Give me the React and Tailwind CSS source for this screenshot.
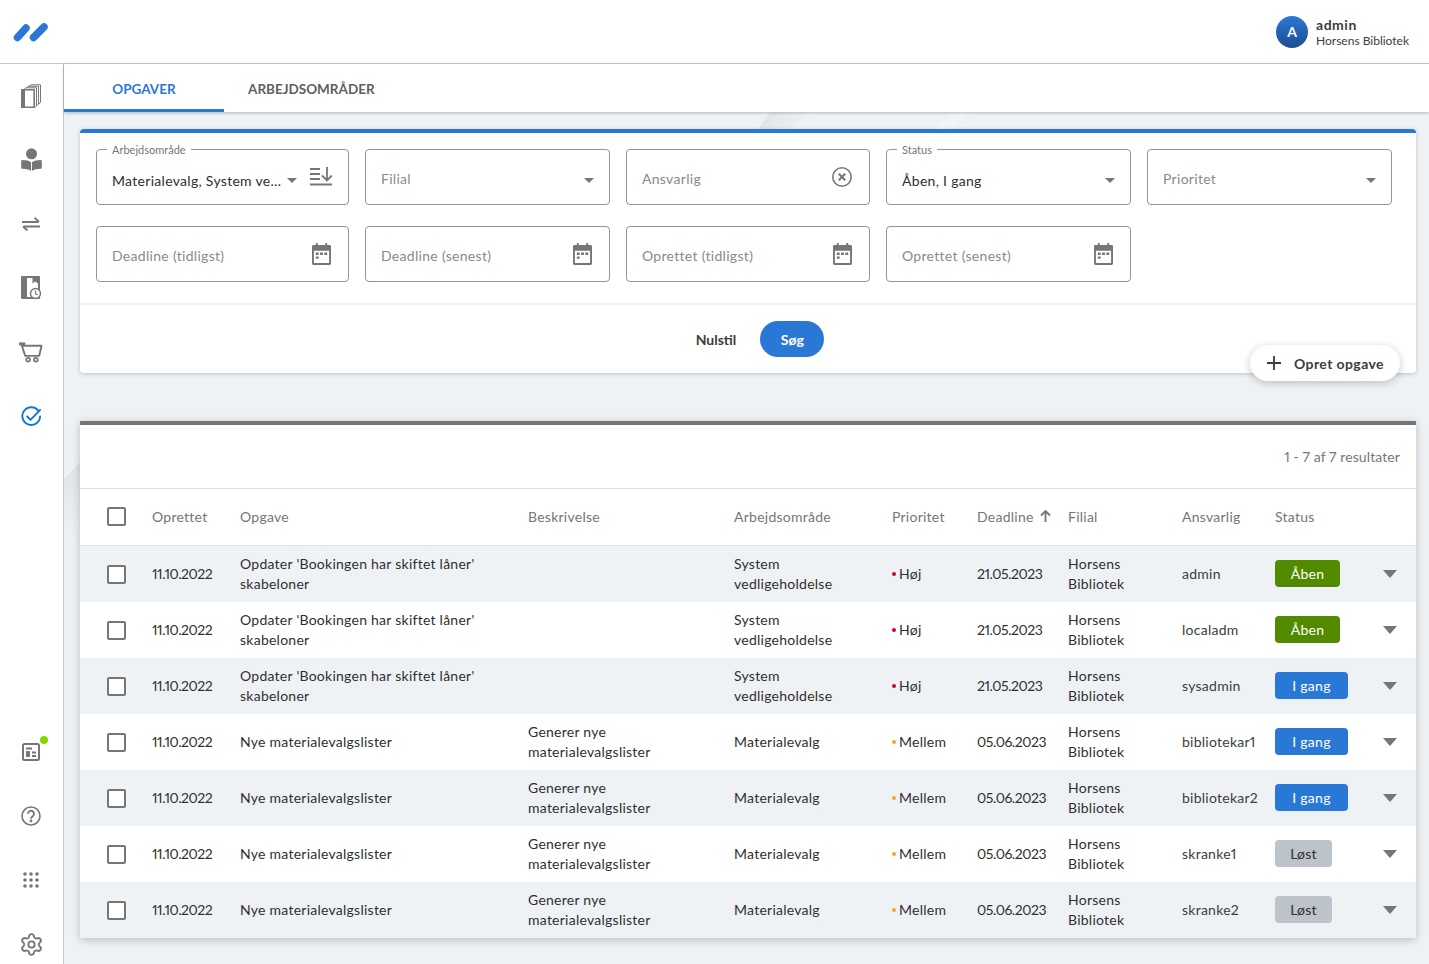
import { Settings } from "lucide-react";

const BLUE = "#2a78d6";

function BooksIcon() {
  return (
    <svg width="20" height="24" viewBox="0 0 20 24" fill="none" stroke="#767676">
      <path d="M8 2.500 9.500 .8h10v17.500L18 20" strokeWidth="1" />
      <path d="M5.500 4 7 2.300h10.500V20L16 21.500" strokeWidth="1" fill="#fff" />
      <path d="M3 5.500 4.500 3.800h11V22L14 23.500" strokeWidth="1" fill="#fff" />
      <path d="M.8 5.800h12.400v17.400H.8z" strokeWidth="1.600" fill="#fff" />
      <path d="M.5 5.500h3.500v18H.5z" fill="#767676" stroke="none" />
    </svg>
  );
}

function ReaderIcon() {
  return (
    <svg width="21" height="24" viewBox="0 0 22 25" fill="#767676">
      <circle cx="11" cy="6" r="5.800" />
      <path d="M1.500 12.500c3.500 0 7 .8 9 2.300V24c-2-1.500-5.500-2.300-9-2.300a1.300 1.300 0 0 1-1.300-1.300v-6.600a1.300 1.300 0 0 1 1.300-1.300z" />
      <path d="M20.500 12.500c-3.500 0-7 .8-9 2.300V24c2-1.500 5.500-2.300 9-2.300a1.300 1.300 0 0 0 1.300-1.300v-6.600a1.300 1.300 0 0 0-1.300-1.300z" />
    </svg>
  );
}

function SwapIcon() {
  return (
    <svg width="18" height="14" viewBox="0 0 18 14" fill="none" stroke="#767676" strokeWidth="1.800">
      <path d="M0 5h16.500M12.500 .7 17 5" />
      <path d="M18 9.500H1.500M5.500 13.500 1 9.500" />
    </svg>
  );
}

function BookClockIcon() {
  return (
    <svg width="20" height="24" viewBox="0 0 20 24" fill="none">
      <rect x="0" y="0" width="19" height="23" rx="1" fill="#767676" />
      <path d="M6 2h11v19H6z" fill="#fff" />
      <path d="M11.500 0h5.500v7.500l-2.750-2-2.750 2z" fill="#767676" />
      <circle cx="14.500" cy="17.500" r="5" stroke="#767676" strokeWidth="1.400" fill="#fff" />
      <path d="M14.500 14.500v3.300l2.300 1" stroke="#767676" strokeWidth="1.200" />
    </svg>
  );
}

function CartIcon() {
  return (
    <svg width="24" height="21" viewBox="0 0 25 21" fill="none" stroke="#767676">
      <path d="M0 1.500h6.500" strokeWidth="3" />
      <path d="M3 3.500h20.500L21 14H6.500z" strokeWidth="2" strokeLinejoin="round" />
      <circle cx="9.500" cy="18" r="2" strokeWidth="1.800" />
      <circle cx="17.500" cy="18" r="2" strokeWidth="1.800" />
    </svg>
  );
}

function TaskIcon() {
  return (
    <svg width="21" height="21" viewBox="0 0 22 22" fill="none" stroke="#0b78d0" strokeWidth="2">
      <path d="M18.300 5.200A9.300 9.300 0 1 0 20 11" strokeLinecap="round" />
      <path d="M6.500 11l3.500 3.500L20 4" strokeLinecap="round" strokeLinejoin="round" />
    </svg>
  );
}

function NewsIcon() {
  return (
    <svg width="18" height="18" viewBox="0 0 18 18" fill="none" stroke="#767676" strokeWidth="2">
      <rect x="1" y="1" width="16" height="16" rx="1.500" />
      <path d="M4 5.500h6" />
      <path d="M4.500 8.500h3v5h-3z" fill="#767676" strokeWidth="1" />
      <path d="M10 9.500h4M10 13h4" />
    </svg>
  );
}

function HelpIcon() {
  return (
    <svg width="20" height="20" viewBox="0 0 20 20" fill="none" stroke="#767676" strokeWidth="1.600">
      <circle cx="10" cy="10" r="9" />
      <path d="M7 7.800a3 3 0 1 1 4.800 2.400c-1.200.8-1.800 1.400-1.800 2.500" strokeWidth="1.800" />
      <circle cx="10" cy="15" r=".6" fill="#767676" />
    </svg>
  );
}

function DotsIcon() {
  const dots = [2, 8, 14];
  return (
    <svg width="16" height="16" viewBox="0 0 16 16" fill="#767676">
      {dots.map((y) => dots.map((x) => <circle key={`${x}-${y}`} cx={x} cy={y} r="1.800" />))}
    </svg>
  );
}

function CalendarIcon() {
  return (
    <svg width="19" height="22" viewBox="0 0 20 23" fill="#767676" className="shrink-0 mr-px">
      <path d="M4 0h2v3H4zM14 0h2v3h-2z" />
      <path d="M1.500 2h17A1.500 1.500 0 0 1 20 3.500v18a1.500 1.500 0 0 1-1.500 1.500h-17A1.500 1.500 0 0 1 0 21.500v-18A1.500 1.500 0 0 1 1.500 2zM2 8v13h16V8z" fillRule="evenodd" />
      <path d="M4 10h3v2.500H4zM8.500 10h3v2.500h-3zM13 10h3v2.500h-3zM4 14h3v2.500H4z" />
    </svg>
  );
}

function Caret({ large }) {
  return large ? (
    <span className="block w-0 h-0 border-x-[7px] border-t-[8px] border-x-transparent border-t-[#767676]" />
  ) : (
    <span className="block w-0 h-0 mt-[7px] translate-x-px border-x-[5px] border-t-[5px] border-x-transparent border-t-[#767676]" />
  );
}

function Field({ label, placeholder, value, children }) {
  return (
    <div className="relative h-14 rounded border border-[#949494] flex items-center pl-[15px] pr-4 tracking-[0.3px]">
      {label && (
        <span className="absolute -top-[7px] left-[10px] bg-white px-[5px] text-[11px] leading-[13px] tracking-normal text-[#767676]">
          {label}
        </span>
      )}
      {value ? (
        <span className="flex-1 truncate pt-[7px] text-[#2f2f2f]">{value}</span>
      ) : (
        <span className="flex-1 truncate pt-[2px] text-[#8a8a8a]">{placeholder}</span>
      )}
      {children}
    </div>
  );
}

const tasks = [
  { name: "Opdater 'Bookingen har skiftet låner' skabeloner", desc: "", area: "System vedligeholdelse", prio: "Høj", deadline: "21.05.2023", owner: "admin", status: "Åben" },
  { name: "Opdater 'Bookingen har skiftet låner' skabeloner", desc: "", area: "System vedligeholdelse", prio: "Høj", deadline: "21.05.2023", owner: "localadm", status: "Åben" },
  { name: "Opdater 'Bookingen har skiftet låner' skabeloner", desc: "", area: "System vedligeholdelse", prio: "Høj", deadline: "21.05.2023", owner: "sysadmin", status: "I gang" },
  { name: "Nye materialevalgslister", desc: "Generer nye materialevalgslister", area: "Materialevalg", prio: "Mellem", deadline: "05.06.2023", owner: "bibliotekar1", status: "I gang" },
  { name: "Nye materialevalgslister", desc: "Generer nye materialevalgslister", area: "Materialevalg", prio: "Mellem", deadline: "05.06.2023", owner: "bibliotekar2", status: "I gang" },
  { name: "Nye materialevalgslister", desc: "Generer nye materialevalgslister", area: "Materialevalg", prio: "Mellem", deadline: "05.06.2023", owner: "skranke1", status: "Løst" },
  { name: "Nye materialevalgslister", desc: "Generer nye materialevalgslister", area: "Materialevalg", prio: "Mellem", deadline: "05.06.2023", owner: "skranke2", status: "Løst" },
];

const badge = {
  "Åben": "w-[65px] bg-[#538b00] text-white",
  "I gang": "w-[73px] bg-[#2a78d6] text-white",
  "Løst": "w-[57px] bg-[#bdc3cb] text-[#2f2f2f]",
};

const cols = "grid grid-cols-[72px_88px_288px_206px_158px_85px_91px_114px_93px_93px_48px] items-center tracking-[0.25px]";

function Checkbox() {
  return <span className="block ml-[27px] w-[19px] h-[19px] rounded-[2px] border-2 border-[#767676] bg-white" />;
}

export default function App() {
  return (
    <div className="h-screen overflow-hidden bg-white flex flex-col font-['Lato',sans-serif] proportional-nums text-[14px] text-[#2f2f2f]">
      <header className="h-16 shrink-0 border-b border-[#c3c7d0] flex items-center justify-between pl-[13px] pr-5">
        <svg width="36" height="20" viewBox="0 0 36 20" stroke={BLUE} strokeWidth="7.500" strokeLinecap="round">
          <path d="M4.500 15.500 13 6M20.500 15.500 31 5" />
        </svg>
        <div className="flex items-center gap-2">
          <div className="w-8 h-8 rounded-full bg-gradient-to-b from-[#2a78d6] to-[#1d4e91] text-white font-bold flex items-center justify-center">A</div>
          <div className="leading-[15px] pt-[2px]">
            <div className="font-bold tracking-[0.5px] text-[#3c3c3c]">admin</div>
            <div className="mt-px text-[12px] text-[#3c3c3c]">Horsens Bibliotek</div>
          </div>
        </div>
      </header>

      <div className="flex flex-1 min-h-0">
        <nav className="w-16 shrink-0 border-r border-[#c3c7d0] flex flex-col">
          {[<BooksIcon />, <ReaderIcon />, <SwapIcon />, <BookClockIcon />, <CartIcon />, <TaskIcon />].map((icon, i) => (
            <div key={i} className="h-16 shrink-0 pr-px flex items-center justify-center">{icon}</div>
          ))}
          <div className="h-[272px] shrink-0" />
          <div className="relative h-16 shrink-0 pr-px flex items-center justify-center">
            <NewsIcon />
            <span className="absolute top-[16px] left-[40px] w-2 h-2 rounded-full bg-[#84d600]" />
          </div>
          <div className="h-16 shrink-0 pr-px flex items-center justify-center"><HelpIcon /></div>
          <div className="h-16 shrink-0 pr-px flex items-center justify-center"><DotsIcon /></div>
          <div className="h-16 shrink-0 pr-px flex items-center justify-center">
            <Settings size={25} color="#767676" strokeWidth={1.800} />
          </div>
        </nav>

        <main className="relative flex-1 min-w-0 flex flex-col bg-[#eff2f5]">
          {/* faint diagonal shapes in the page background */}
          <svg className="absolute inset-0 w-full h-full">
            <defs>
              <linearGradient id="band" x1="0" x2="1" y1="0" y2="0">
                <stop offset="0" stopColor="#e0e3e7" />
                <stop offset="1" stopColor="#eff2f5" />
              </linearGradient>
              <linearGradient id="fade" x1="0" x2="0" y1="0" y2="1">
                <stop offset="0" stopColor="#e0e3e7" />
                <stop offset="1" stopColor="#eff2f5" />
              </linearGradient>
            </defs>
            <path d="M706 48h40l-20 20h-34z" fill="url(#band)" />
            <path d="M890 48h16l-20 20h-16z" fill="#f3f4f5" />
            <path d="M16 398 0 415v60h16z" fill="url(#fade)" />
            <path d="M1352 790v60l-20 20v-60z" fill="#f5f6f8" />
          </svg>

          <div className="h-12 shrink-0 bg-white flex shadow-[0_1px_3px_rgba(0,0,0,0.25)] relative">
            <div className="w-40 border-b-[3px] border-[#2a78d6] flex items-center justify-center font-bold text-[13.500px] text-[#2a78d6] pt-[5px]">OPGAVER</div>
            <div className="px-6 flex items-center font-bold text-[13.500px] text-[#5f5f5f] pt-[2px]">ARBEJDSOMRÅDER</div>
          </div>

          <div className="relative pl-4 pr-[13px] pt-[17px]">
            <section className="relative bg-white rounded border-t-4 border-[#2a78d6] shadow-[0_1px_4px_rgba(0,0,0,0.2)]">
              <div className="grid grid-cols-[253px_245px_244px_245px_245px] gap-x-4 gap-y-[21px] px-4 pt-4 pb-[21px] border-b-2 border-[#f1f4f7]">
                <Field label="Arbejdsområde" value="Materialevalg, System vedligeholdelse">
                  <span className="ml-[2px]"><Caret /></span>
                  <svg width="22" height="19" viewBox="0 0 22 19" fill="none" stroke="#767676" strokeWidth="1.800" className="ml-[14px] -mt-[1px]">
                    <path d="M0 17.500h22M0 2h10M0 7h10M0 12h10" />
                    <path d="M17 0v13M12 8.500l5 5 5-5" />
                  </svg>
                </Field>
                <Field placeholder="Filial"><Caret /></Field>
                <Field placeholder="Ansvarlig">
                  <svg width="22" height="22" viewBox="0 0 22 22" fill="none" stroke="#767676">
                    <circle cx="11" cy="11" r="9.200" strokeWidth="1.600" />
                    <path d="M7.800 7.800l6.400 6.400M14.200 7.800l-6.400 6.400" strokeWidth="2" />
                  </svg>
                </Field>
                <Field label="Status" value="Åben, I gang"><Caret /></Field>
                <Field placeholder="Prioritet"><Caret /></Field>
                <Field placeholder="Deadline (tidligst)"><CalendarIcon /></Field>
                <Field placeholder="Deadline (senest)"><CalendarIcon /></Field>
                <Field placeholder="Oprettet (tidligst)"><CalendarIcon /></Field>
                <Field placeholder="Oprettet (senest)"><CalendarIcon /></Field>
              </div>
              <div className="h-[68px] flex items-center justify-center gap-6 pl-6">
                <span className="font-bold text-[#3c3c3c]">Nulstil</span>
                <span className="w-16 h-9 rounded-full bg-[#2a78d6] text-white font-bold flex items-center justify-center">Søg</span>
              </div>
              <div className="absolute right-4 -bottom-2 h-9 w-[150px] rounded-full bg-white shadow-[0_2px_8px_rgba(0,0,0,0.22)] flex items-center pl-4 gap-3">
                <svg width="16" height="16" viewBox="0 0 16 16" stroke="#3c3c3c" strokeWidth="1.800"><path d="M8 1v14M1 8h14" /></svg>
                <span className="font-bold tracking-[0.4px] text-[#3c3c3c]">Opret opgave</span>
              </div>
            </section>

            <section className="mt-12 bg-white border-t-4 border-[#767676] shadow-[0_2px_8px_rgba(0,0,0,0.22)]">
              <div className="h-[64px] border-b border-[#e0e0e0] flex items-center justify-end pr-4 text-[#767676] tracking-[0.1px]">1 - 7 af 7 resultater</div>
              <div className={`${cols} h-[57px] pb-[2px] border-b border-[#e0e0e0] text-[#767676]`}>
                <span className="block pt-px"><Checkbox /></span>
                <span>Oprettet</span>
                <span>Opgave</span>
                <span>Beskrivelse</span>
                <span>Arbejdsområde</span>
                <span>Prioritet</span>
                <span className="flex items-center gap-[6px]">
                  Deadline
                  <svg width="11" height="12" viewBox="0 0 11 12" fill="none" stroke="#767676" strokeWidth="1.800"><path d="M5.500 12V1M1 5.500l4.500-4.500 4.500 4.500" /></svg>
                </span>
                <span>Filial</span>
                <span>Ansvarlig</span>
                <span>Status</span>
                <span />
              </div>
              {tasks.map((t, i) => (
                <div key={i} className={`${cols} h-14 leading-5 ${i % 2 === 0 ? "bg-[#eff2f5]" : "bg-white"}`}>
                  <Checkbox />
                  <span className="tracking-[-0.45px]">11.10.2022</span>
                  <span className="pr-10">{t.name}</span>
                  <span className="pr-10">{t.desc}</span>
                  <span className="pr-10">{t.area}</span>
                  <span className="flex items-center">
                    <span className={`w-1 h-1 rounded-full mr-[3px] ${t.prio === "Høj" ? "bg-[#d0021b]" : "bg-[#f5a623]"}`} />
                    {t.prio}
                  </span>
                  <span className="tracking-[-0.45px]">{t.deadline}</span>
                  <span className="pr-8">Horsens Bibliotek</span>
                  <span className="text-[#3c3c3c]">{t.owner}</span>
                  <span className={`h-[27px] -mt-px rounded flex items-center justify-center ${badge[t.status]}`}>{t.status}</span>
                  <span className="pl-[15px]"><Caret large /></span>
                </div>
              ))}
            </section>
          </div>
        </main>
      </div>
    </div>
  );
}
